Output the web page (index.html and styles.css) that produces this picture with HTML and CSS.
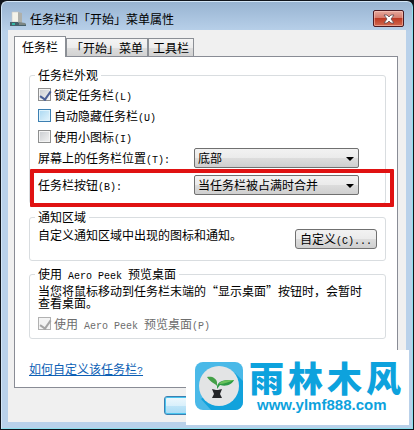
FILE: index.html
```html
<!DOCTYPE html>
<html lang="zh-CN">
<head>
    <meta charset="UTF-8">
    <meta name="viewport" content="width=device-width, initial-scale=1.0">
    <title>任务栏和「开始」菜单属性</title>
    <link rel="stylesheet" href="styles.css">
</head>
<body>
    <div class="window">
        <header class="title-bar">
            <svg class="title-icon" width="17" height="16" viewBox="0 0 17 16" aria-hidden="true">
                <path d="M2 1h7v10H2z" fill="#f4f3ea" stroke="#c9cbc4" stroke-width="0.6"/>
                <path d="M8 1l4 1v11H8z" fill="#aeb0ab"/>
                <path d="M0 11h8l1 1h5l2 1v2H0z" fill="#46606a"/>
                <path d="M9 11l6 1 1 2H9z" fill="#7c8684"/>
                <rect x="2" y="12" width="3" height="2" fill="#35b7a5"/>
            </svg>
            <h1 class="title">任务栏和「开始」菜单属性</h1>
            <button class="close" aria-label="关闭">
                <svg width="12" height="10" viewBox="0 0 12 10">
                    <path d="M1 1h3l2 2 2-2h3L8 5l3 4H8L6 7 4 9H1l3-4z" fill="#fff" stroke="#5d4a50" stroke-width="0.8"/>
                </svg>
            </button>
        </header>

        <main class="content">
            <div class="tabs" role="tablist">
                <button class="tab active" role="tab" aria-selected="true">任务栏</button>
                <button class="tab" role="tab" aria-selected="false">「开始」菜单</button>
                <button class="tab" role="tab" aria-selected="false">工具栏</button>
            </div>

            <div class="panel" role="tabpanel">
                <fieldset class="group look">
                    <legend>任务栏外观</legend>
                    <div class="check-row">
                        <input type="checkbox" id="lock" checked>
                        <label for="lock">锁定任务栏<span class="latin">(L)</span></label>
                    </div>
                    <div class="check-row">
                        <input type="checkbox" id="hide" class="hot">
                        <label for="hide">自动隐藏任务栏<span class="latin">(U)</span></label>
                    </div>
                    <div class="check-row">
                        <input type="checkbox" id="small">
                        <label for="small">使用小图标<span class="latin">(I)</span></label>
                    </div>
                    <div class="select-row">
                        <label for="position">屏幕上的任务栏位置<span class="latin">(T):</span></label>
                        <div class="select-box">
                            <select id="position">
                                <option>底部</option>
                                <option>左侧</option>
                                <option>右侧</option>
                                <option>顶部</option>
                            </select>
                        </div>
                    </div>
                    <div class="select-row marked">
                        <label for="buttons">任务栏按钮<span class="latin">(B):</span></label>
                        <div class="select-box">
                            <select id="buttons">
                                <option>当任务栏被占满时合并</option>
                                <option>从不合并</option>
                            </select>
                        </div>
                    </div>
                </fieldset>

                <fieldset class="group notify">
                    <legend>通知区域</legend>
                    <div class="notify-row">
                        <p>自定义通知区域中出现的图标和通知。</p>
                        <button class="customize">自定义<span class="latin">(C)...</span></button>
                    </div>
                </fieldset>

                <fieldset class="group peek">
                    <legend>使用<span class="latin"> Aero Peek </span>预览桌面</legend>
                    <p>当您将鼠标移动到任务栏末端的“显示桌面”按钮时，会暂时查看桌面。</p>
                    <div class="check-row disabled">
                        <input type="checkbox" id="aero" checked disabled>
                        <label for="aero">使用<span class="latin"> Aero Peek </span>预览桌面<span class="latin">(P)</span></label>
                    </div>
                </fieldset>

                <a class="help" href="#">如何自定义该任务栏<span class="latin">?</span></a>
            </div>

            <div class="actions">
                <button class="ok" aria-label="确定"></button>
            </div>
        </main>

        <div class="watermark">
            <svg class="logo" width="48" height="48" viewBox="0 0 48 48" aria-hidden="true">
                <rect width="48" height="48" rx="8" fill="#4ab9e8"/>
                <path d="M6 37L40 11l8 8v21a8 8 0 0 1-8 8H16z" fill="#12a2dc"/>
                <circle cx="24" cy="24" r="20" fill="#e3e4e5"/>
                <path d="M12 15c5-1 9 1 10 5v4c-2-3-6-3-10-9z" fill="#43a047"/>
                <path d="M22 24c2-6 8-6 17-6-2 4-7 7-14 5l-3 4z" fill="#2e9b45"/>
                <path d="M24 22c5 0 10-2 15-4-6 0-13 0-15 4z" fill="#6cc35c"/>
                <path d="M17 27l4 1h2l4-1-2 5 2 4H17l2-4z" fill="#242528"/>
            </svg>
            <div class="brand">
                <div class="brand-name"><span>雨</span><span>林</span><span>木</span><span>风</span></div>
                <div class="brand-url">www.ylmf888.com</div>
            </div>
        </div>
    </div>
</body>
</html>
```

FILE: styles.css
```css
* {
    box-sizing: border-box;
}

body {
    margin: 0;
    padding: 1px;
    background: #10151c;
    font-family: "Noto Sans CJK SC", "Liberation Sans", sans-serif;
    font-size: 12px;
    line-height: 12px;
    color: #000;
}

button,
select,
input {
    font: inherit;
    color: inherit;
    margin: 0;
}

h1,
p {
    margin: 0;
    font-size: 12px;
    font-weight: normal;
}

.latin {
    font-family: "Liberation Mono", monospace;
    font-size: 10px;
    line-height: 1px;
    white-space: pre;
}

.window {
    position: relative;
    min-height: calc(100vh - 2px);
    padding: 0 6px 6px;
    background: linear-gradient(#98b4d2, #b9d1ea 30px, #b9d1ea);
    border: 1px solid #d3e6f7;
    border-right-color: #8ce0ee;
    border-bottom-color: #8ce0ee;
    border-radius: 6px 6px 0 0;
}

/* title bar */
.title-bar {
    display: flex;
    align-items: center;
    height: 28px;
    padding-top: 5px;
}

.title-icon {
    margin: 0 3px 0 2px;
}

.title {
    flex: 1;
}

.close {
    display: flex;
    align-items: center;
    justify-content: center;
    width: 31px;
    height: 17px;
    margin-right: 2px;
    padding: 0;
    border: 1px solid #4b1a22;
    border-radius: 2px;
    background: linear-gradient(#e6a99d, #d5796a 48%, #bd3a24 50%, #d2694f);
    box-shadow: inset 0 0 0 1px rgba(255, 210, 200, 0.5);
}

.content {
    padding: 6px 8px 7px 6px;
    background: #f0f0f0;
}

/* tabs */
.tabs {
    display: flex;
    align-items: flex-end;
    height: 20px;
}

.tab {
    height: 18px;
    padding: 0 4px;
    border: 1px solid #8b8f95;
    border-bottom: none;
    background: linear-gradient(#f4f4f4, #ececec 50%, #dedede 50%, #d2d2d2);
}

.tab.active {
    position: relative;
    height: 21px;
    margin-bottom: -1px;
    padding: 0 7px;
    background: #fff;
}

.panel {
    display: flex;
    flex-direction: column;
    gap: 7px;
    padding: 12px 11px 12px 14px;
    background: #fff;
    border: 1px solid #898c95;
}

/* groups */
.group {
    min-width: 0;
    margin: 0;
    padding: 0 8px;
    border: 1px solid #d9dde0;
    border-radius: 3px;
}

.group legend {
    margin-left: -3px;
    padding: 0 3px;
}

.look {
    padding-top: 3px;
    padding-bottom: 8px;
}

.notify {
    padding-top: 6px;
    padding-bottom: 11px;
}

.peek {
    padding-top: 5px;
    padding-bottom: 4px;
}

.peek p {
    margin-right: 12px;
}

.check-row {
    display: flex;
    align-items: center;
    gap: 3px;
    height: 21px;
}

.check-row input {
    position: relative;
    appearance: none;
    width: 13px;
    height: 13px;
    border: 1px solid #8e8f8f;
    background: linear-gradient(135deg, #c9ccd0, #f3f3f3);
    box-shadow: inset 0 0 0 1px #f4f4f4;
}

.check-row input.hot {
    border-color: #3c7fb1;
    background: linear-gradient(135deg, #a9d8f2, #e4f4fc);
    box-shadow: inset 0 0 0 1px #dff3fc;
}

.check-row input:checked::after {
    content: "";
    position: absolute;
    left: 3px;
    top: 0;
    width: 5px;
    height: 9px;
    border: solid #4a5f97;
    border-width: 0 2px 2px 0;
    transform: rotate(35deg);
}

.check-row.disabled {
    margin-top: 4px;
    color: #6d6d6d;
}

.check-row.disabled input {
    border-color: #b1b1b1;
    background: #f3f3f3;
}

.check-row.disabled input:checked::after {
    border-color: #a5a5a5;
}

.select-row {
    position: relative;
    display: flex;
    align-items: center;
    margin: 1px 18px 0 0;
}

.select-row label {
    width: 156px;
}

.select-box {
    position: relative;
    flex: 1;
}

.select-box select {
    display: block;
    appearance: none;
    width: 100%;
    height: 20px;
    padding: 0 3px;
    border: 1px solid #707070;
    border-radius: 2px;
    background: linear-gradient(#f2f2f2, #ebebeb 50%, #dddddd 50%, #cfcfcf);
}

.select-box::after {
    content: "";
    position: absolute;
    right: 5px;
    top: 9px;
    border: 4px solid transparent;
    border-top-color: #000;
    border-bottom: none;
}

.select-row.marked {
    margin-top: 7px;
}

/* red frame round the taskbar buttons row */
.select-row.marked::before {
    content: "";
    position: absolute;
    inset: -6px -35px -12px -8px;
    border: 4px solid #e01212;
    border-radius: 1px;
    pointer-events: none;
}

.notify-row {
    display: flex;
    justify-content: space-between;
}

.customize {
    width: 82px;
    height: 20px;
    padding: 0;
    border: 1px solid #707070;
    border-radius: 3px;
    background: linear-gradient(#f2f2f2, #ebebeb 50%, #dddddd 50%, #cfcfcf);
}

.help {
    align-self: flex-start;
    margin-top: 17px;
    color: #0d5fb5;
    text-decoration: underline;
}

.actions {
    display: flex;
    padding: 8px 0 0 150px;
}

.ok {
    width: 75px;
    height: 19px;
    border: 1px solid #3c7fb1;
    border-radius: 3px;
    background: linear-gradient(#eef8fd, #d9f0fb 50%, #bfe5f8 50%, #a8dbf5);
    box-shadow: inset 0 0 0 1px #48c4ee;
}

/* site mark in the corner */
.watermark {
    position: absolute;
    right: 3px;
    bottom: 3px;
    display: flex;
    gap: 6px;
    width: 223px;
    height: 75px;
    padding: 12px 0 0 9px;
    background: #fff;
    color: #0da2dd;
    font-weight: bold;
}

.logo {
    flex: none;
}

.brand-name {
    display: flex;
    gap: 4px;
    font-size: 35px;
    font-weight: 900;
    line-height: 30px;
}

.brand-url {
    padding: 4px 0 0 8px;
    font-family: "Liberation Sans", sans-serif;
    font-size: 15px;
    line-height: 18px;
}
```
